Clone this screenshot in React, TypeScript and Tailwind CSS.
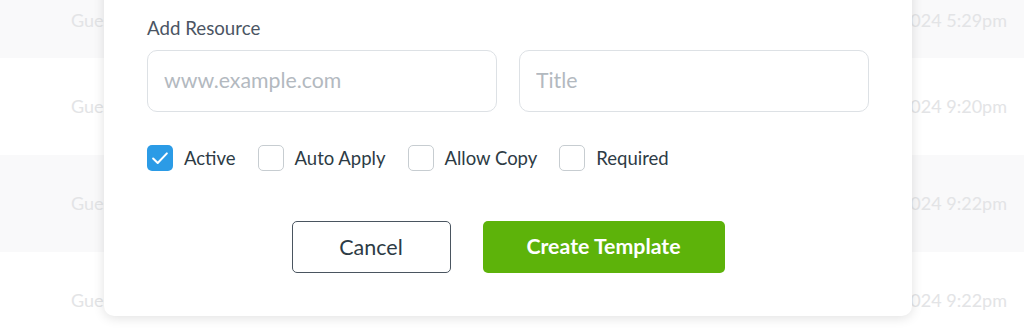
import React from 'react';

const rows = [
  { name: 'Guest', date: 'Mar 12, 2024 5:29pm', shade: true, h: 'h-[58px]', pad: 'pb-[18px]' },
  { name: 'Guest', date: 'Mar 14, 2024 9:20pm', shade: false, h: 'h-[97px]', pad: '' },
  { name: 'Guest', date: 'Mar 14, 2024 9:22pm', shade: true, h: 'h-[97px]', pad: '' },
  { name: 'Guest', date: 'Mar 14, 2024 9:22pm', shade: false, h: 'h-[97px]', pad: '' },
];

const CheckIcon = () => (
  <svg viewBox="0 0 24 24" className="w-[22px] h-[22px]" fill="none" stroke="white" strokeWidth={2.2} strokeLinecap="round" strokeLinejoin="round">
    <path d="M4.5 12.5l5 5L19.5 7" />
  </svg>
);

const Check: React.FC<{ label: string; checked?: boolean }> = ({ label, checked }) => (
  <label className="flex items-center gap-[11px] mr-[22px]">
    {checked ? (
      <span className="w-[26px] h-[26px] rounded-[5px] bg-[#2b9be6] flex items-center justify-center">
        <CheckIcon />
      </span>
    ) : (
      <span className="w-[26px] h-[26px] rounded-[5px] border border-[#c7cdd1] bg-white" />
    )}
    <span className="text-[18.5px] leading-[28px] text-[#2d3b45]">{label}</span>
  </label>
);

export default function App() {
  return (
    <div className="relative h-[332px] w-[1024px] overflow-hidden bg-white" style={{ fontFamily: 'Lato, "Noto Sans", sans-serif' }}>
      <div className="flex flex-col">
        {rows.map((r, i) => (
          <div key={i} className={`${r.h} ${r.pad} ${r.shade ? 'bg-[#f9f9fa]' : 'bg-white'} flex items-center justify-between pl-[71px] pr-[17px] text-[18px] text-[#e3e4e6]`}>
            <span>{r.name}</span>
            <span>{r.date}</span>
          </div>
        ))}
      </div>

      <div className="absolute left-[104px] w-[808px] top-[-60px] bottom-[16px] bg-white rounded-b-[10px] shadow-[0_2px_12px_rgba(0,0,0,0.12)] px-[43px] pb-[43px] flex flex-col justify-end">
        <div className="text-[18.7px] text-[#4b5563] leading-[24px] mb-[10px]">Add Resource</div>
        <div className="flex gap-[22px]">
          <input
            placeholder="www.example.com"
            className="w-[350px] h-[62px] rounded-[10px] border border-[#dde1e5] px-[16px] pb-[2px] text-[21.3px] placeholder:text-[#b3b9bf] outline-none"
          />
          <input
            placeholder="Title"
            className="w-[350px] h-[62px] rounded-[10px] border border-[#dde1e5] px-[16px] pb-[2px] text-[21.3px] placeholder:text-[#b3b9bf] outline-none"
          />
        </div>
        <div className="flex items-center mt-[32px]">
          <Check label="Active" checked />
          <Check label="Auto Apply" />
          <Check label="Allow Copy" />
          <Check label="Required" />
        </div>
        <div className="flex justify-center gap-[32px] mt-[49px]">
          <button className="w-[159px] h-[52px] rounded-[5px] border border-[#4a5560] text-[21.5px] text-[#2d3b45] bg-white">
            Cancel
          </button>
          <button className="w-[242px] h-[52px] rounded-[5px] bg-[#5db30a] text-[21.3px] font-bold text-white">
            Create Template
          </button>
        </div>
      </div>
    </div>
  );
}
